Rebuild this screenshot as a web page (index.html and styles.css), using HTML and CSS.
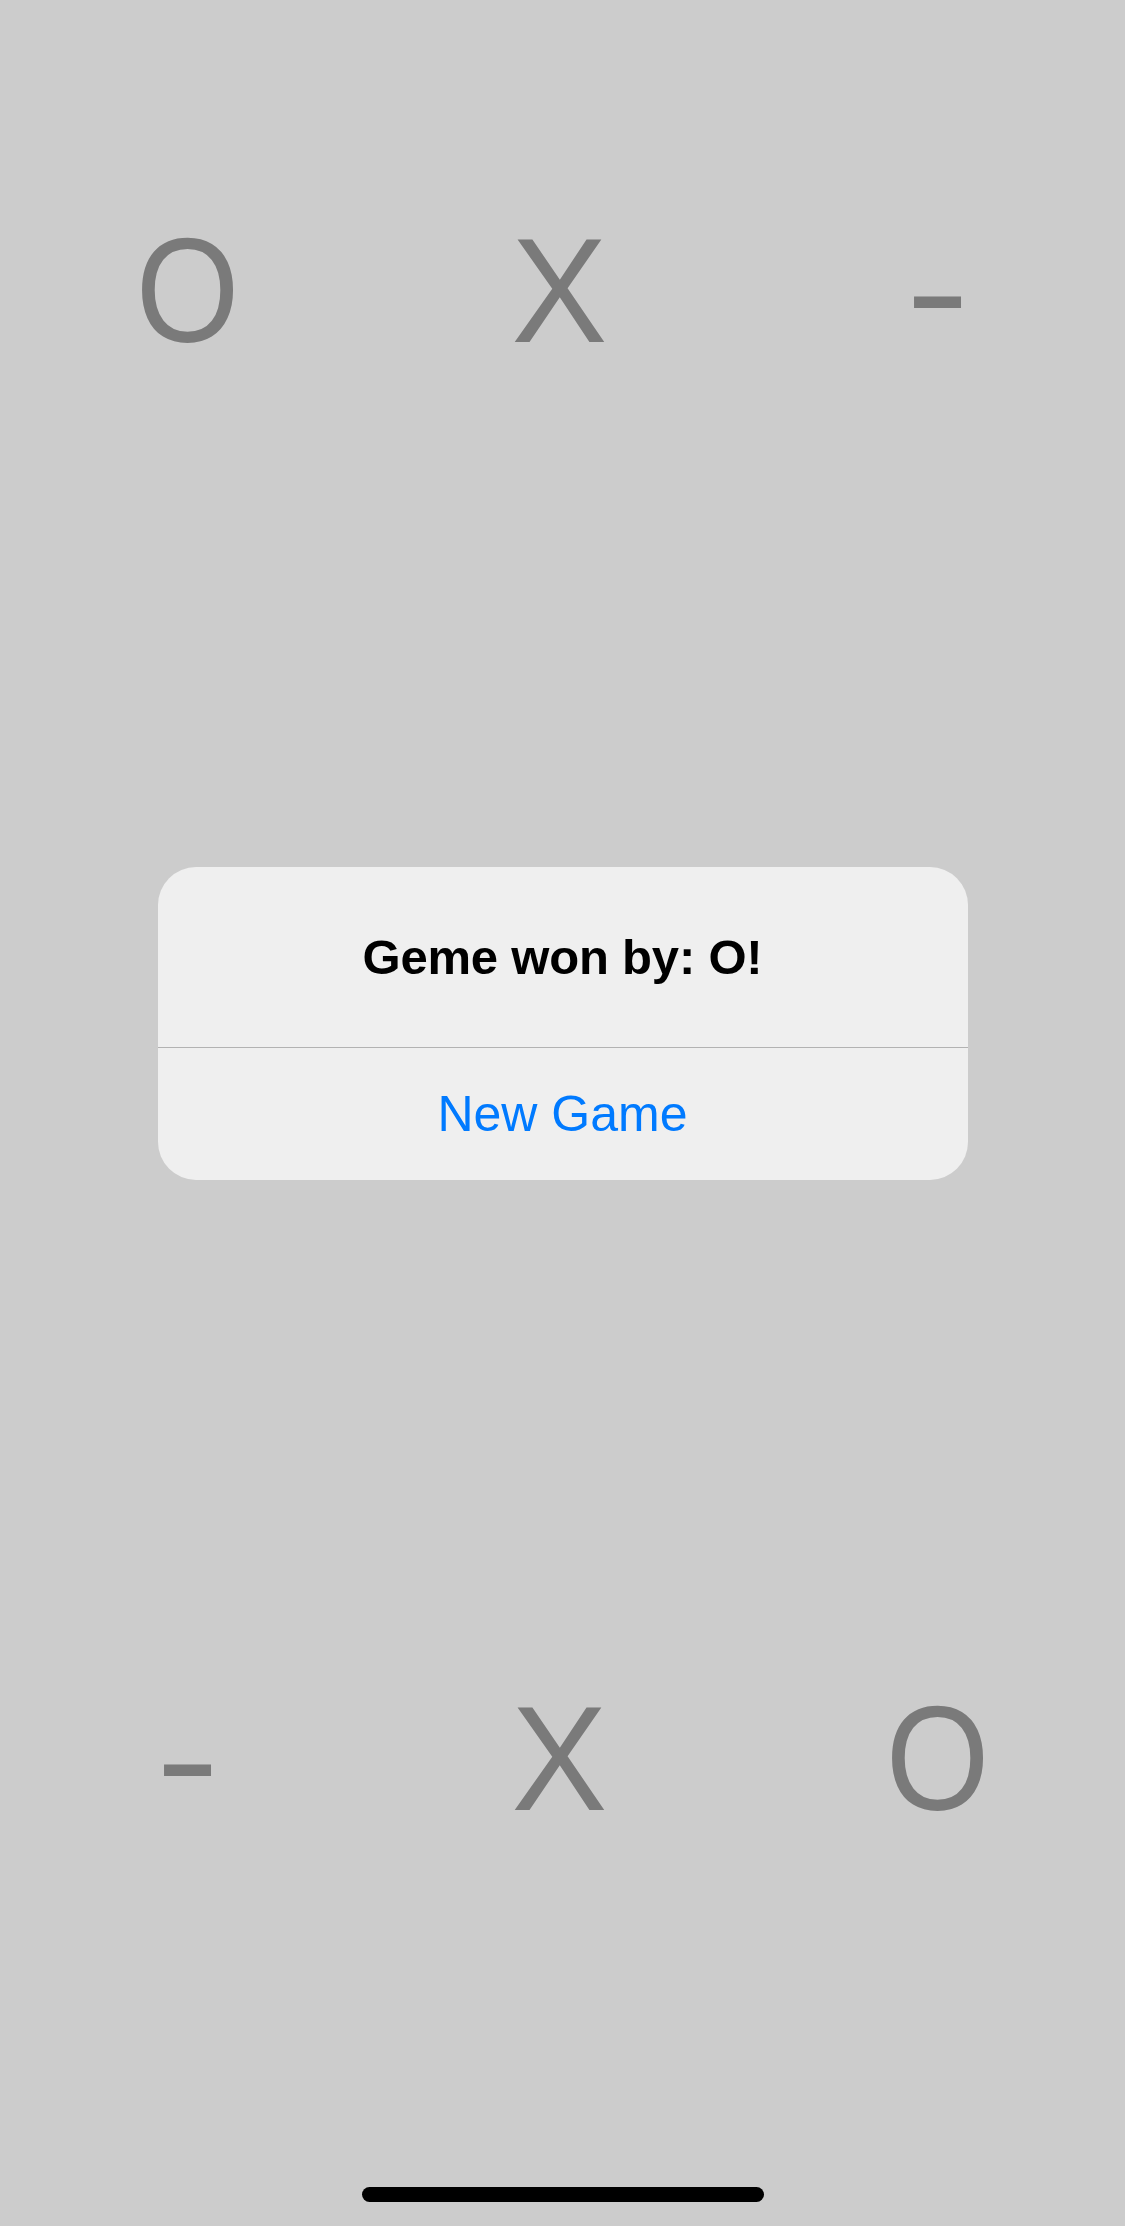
FILE: index.html
```html
<!DOCTYPE html>
<html lang="en">
<head>
<meta charset="utf-8">
<title>Tic Tac Toe</title>
<link rel="stylesheet" href="styles.css">
</head>
<body>
<div class="screen">
  <div class="board">
    <div class="cell"><span class="mark mark-o">O</span></div>
    <div class="cell"><span class="mark mark-x">X</span></div>
    <div class="cell"><span class="mark dash">-</span></div>
    <div class="cell"></div>
    <div class="cell"></div>
    <div class="cell"></div>
    <div class="cell"><span class="mark dash">-</span></div>
    <div class="cell"><span class="mark mark-x">X</span></div>
    <div class="cell"><span class="mark mark-o">O</span></div>
  </div>

  <div class="overlay">
    <div class="alert" role="alertdialog">
      <div class="alert-body">
        <h2 class="alert-title">Geme won by: O!</h2>
      </div>
      <button class="alert-button" type="button">New Game</button>
    </div>
  </div>

  <div class="home-indicator"></div>
</div>
</body>
</html>
```

FILE: styles.css
```css
html, body {
  margin: 0;
  padding: 0;
}

body {
  background: #cccccc;
  font-family: "Liberation Sans", Arial, sans-serif;
}

.screen {
  position: relative;
  width: 1125px;
  height: 2226px;
  overflow: hidden;
  background: #cccccc;
}

.board {
  display: grid;
  grid-template-columns: repeat(3, 375px);
  grid-template-rows: repeat(3, 200px);
  row-gap: 534px;
  padding-top: 191px;
}

.cell {
  display: flex;
  justify-content: center;
  height: 200px;
  line-height: 200px;
  font-size: 148px;
  color: #7a7a7a;
}

.mark {
  display: inline-block;
}

.mark-o {
  transform: scaleX(0.9);
}

.mark-x {
  transform: translateX(-3px) scaleX(0.97);
}

.dash {
  transform: scaleX(1.3);
}

.overlay {
  position: absolute;
  inset: 0;
  display: flex;
  flex-direction: column;
  align-items: center;
  padding-top: 867px;
  box-sizing: border-box;
}

.alert {
  width: 810px;
  background: #efefef;
  border-radius: 38px;
  overflow: hidden;
  display: flex;
  flex-direction: column;
}

.alert-body {
  height: 180px;
  display: flex;
  align-items: center;
  justify-content: center;
  border-bottom: 1px solid #b2b2b2;
}

.alert-title {
  margin: 0;
  font-family: "Liberation Sans", Arial, sans-serif;
  font-weight: 700;
  font-size: 49px;
  color: #000000;
  letter-spacing: -0.2px;
}

.alert-button {
  height: 132px;
  border: 0;
  padding: 0;
  background: transparent;
  font-family: "Liberation Sans", Arial, sans-serif;
  font-size: 50px;
  color: #007aff;
}

.home-indicator {
  position: absolute;
  left: 362px;
  top: 2187px;
  width: 402px;
  height: 15px;
  border-radius: 8px;
  background: #000000;
}
```
